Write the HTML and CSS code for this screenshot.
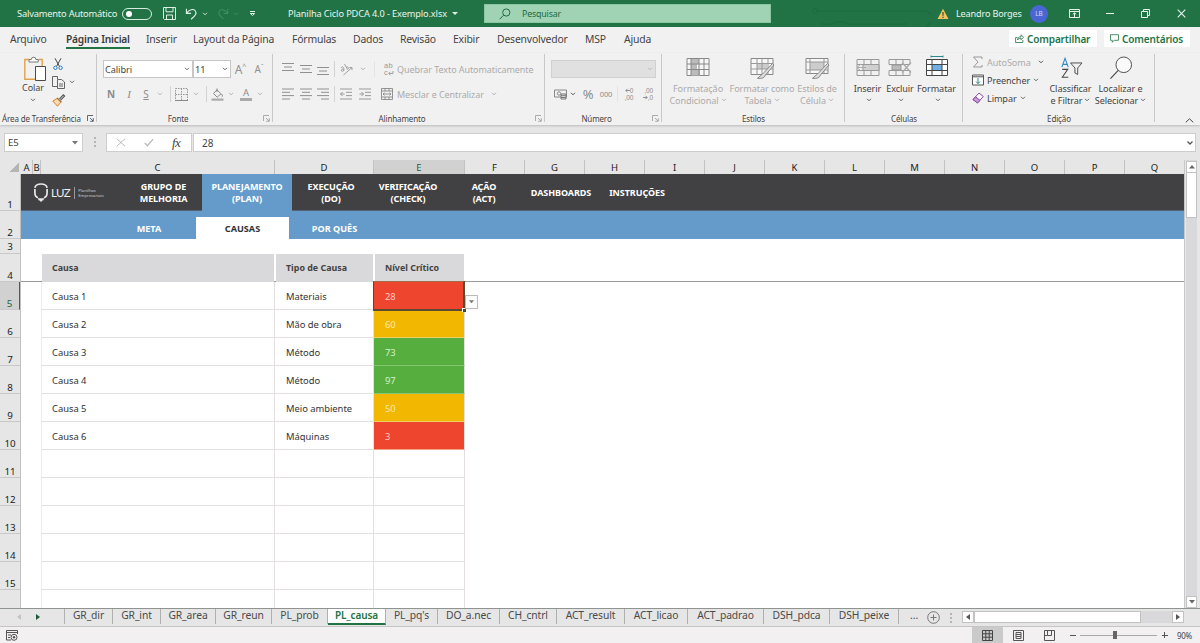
FILE: index.html
```html
<!DOCTYPE html>
<html lang="pt-BR">
<head>
<meta charset="utf-8">
<title>Planilha Ciclo PDCA 4.0 - Exemplo.xlsx</title>
<link rel="stylesheet" href="styles.css">
</head>
<body>
<svg class="defs" aria-hidden="true">
  <symbol id="chev" viewBox="0 0 6 4"><path d="M1 .8l2 2 2-2" fill="none" stroke="currentColor" stroke-width=".9"/></symbol>
  <symbol id="launch" viewBox="0 0 7 7"><path d="M.5 6V.5H6M3 3l3 3M6.3 3.2v3.1H3.2" fill="none" stroke="currentColor" stroke-width=".8"/></symbol>
  <symbol id="al-l" viewBox="0 0 12 12"><path d="M0 1h12M0 4.3h8M0 7.6h12M0 11h8" stroke="currentColor"/></symbol>
  <symbol id="al-c" viewBox="0 0 12 12"><path d="M0 1h12M2 4.3h8M0 7.6h12M2 11h8" stroke="currentColor"/></symbol>
  <symbol id="al-r" viewBox="0 0 12 12"><path d="M0 1h12M4 4.3h8M0 7.6h12M4 11h8" stroke="currentColor"/></symbol>
  <symbol id="v-al" viewBox="0 0 12 8"><path d="M0 .5h12M2 4h8M0 7.5h12" stroke="currentColor"/></symbol>
</svg>

<header class="titlebar">
  <span class="autosave">Salvamento Automático</span>
  <span class="toggle"></span>
  <svg class="save" viewBox="0 0 13 13"><path d="M.5.5h12v12h-11l-1-1zM3 .5v4.3h7V.5M3.5 12.500V8h6v4.500" fill="none" stroke="#dff0e5"/></svg>
  <svg class="undo" viewBox="0 0 14 13"><path d="M1.500.8v5h5M1.800 5.500C4.500 1.500 9 .5 11 3s.6 5.300-4.500 9.200" fill="none" stroke="#dff0e5" stroke-width="1.200"/></svg>
  <svg class="chev light"><use href="#chev"/></svg>
  <svg class="redo" viewBox="0 0 14 13"><path d="M12.500.8v5h-5M12.200 5.500C9.500 1.500 5 .5 3 3s-.6 5.300 4.500 9.200" fill="none" stroke="#428f62" stroke-width="1.200"/></svg>
  <svg class="chev faded"><use href="#chev"/></svg>
  <svg class="qat" viewBox="0 0 7 7"><path d="M1 1.500h5M1.300 3.500l2.200 2 2.200-2z" fill="none" stroke="#dff0e5"/></svg>
  <span class="filename">Planilha Ciclo PDCA 4.0 - Exemplo.xlsx</span>
  <svg class="caret" viewBox="0 0 6 4"><path d="M0 0h6L3 3z" fill="#dff0e5"/></svg>
  <div class="search">
    <svg viewBox="0 0 12 12"><circle cx="7.300" cy="4.500" r="3.600" fill="none" stroke="#216b41"/><path d="M4.600 7.200L.7 11.200" stroke="#216b41"/></svg>
    <span>Pesquisar</span>
  </div>
  <div class="circuit"><svg viewBox="0 0 160 27"><path d="M5 11h110l10 6h35M10 24h12a8 5 0 0 1 14 0h60M115 27l6-6h39" fill="none" stroke="#1d6a3f" stroke-width="1.200"/><circle cx="4" cy="11" r="2.500" fill="none" stroke="#1d6a3f"/></svg></div>
  <svg class="warn" viewBox="0 0 12 12"><path d="M6 .8L11.500 11H.5z" fill="#f2c25c"/><path d="M6 4v3.800M6 8.800v1.200" stroke="#4c4526" stroke-width="1.200"/></svg>
  <span class="user">Leandro Borges</span>
  <span class="avatar">LB</span>
  <svg class="win ribbon-opt" viewBox="0 0 11 9"><path d="M.5.5h10v8H.5zM.5 2.500h10M5.500 8V4M3.800 5.400l1.700-1.600 1.700 1.600" fill="none" stroke="#e8f4ec"/></svg>
  <svg class="win min" viewBox="0 0 8 9"><path d="M0 4.500h8" stroke="#e8f4ec"/></svg>
  <svg class="win max" viewBox="0 0 9 9"><path d="M.5 2.500h6v6h-6zM2.500 2.500v-2h6v6h-2" fill="none" stroke="#e8f4ec"/></svg>
  <svg class="win close" viewBox="0 0 9 9"><path d="M.7.7l7.600 7.600M8.300.7L.7 8.300" stroke="#e8f4ec" stroke-width="1.100"/></svg>
</header>

<nav class="menu">
  <span class="m-arquivo">Arquivo</span>
  <span class="m-home active">Página Inicial</span>
  <span class="m-inserir">Inserir</span>
  <span class="m-layout">Layout da Página</span>
  <span class="m-formulas">Fórmulas</span>
  <span class="m-dados">Dados</span>
  <span class="m-revisao">Revisão</span>
  <span class="m-exibir">Exibir</span>
  <span class="m-dev">Desenvolvedor</span>
  <span class="m-msp">MSP</span>
  <span class="m-ajuda">Ajuda</span>
  <div class="menu-actions">
    <span class="action share"><svg viewBox="0 0 9 9"><path d="M2.500 3.500H.6v5h7.300V6M2.500 6c.2-2.200 1.500-3.300 3.500-3.300V.8l2.600 2.500L6 5.700V4.200C4.500 4.200 3.300 4.700 2.500 6z" fill="none" stroke="#217346" stroke-width=".8"/></svg>Compartilhar</span>
    <span class="action comments"><svg viewBox="0 0 9 9"><path d="M.5.7h8v5.600H4.200L2.300 8.300v-2H.5z" fill="none" stroke="#217346" stroke-width=".8"/></svg>Comentários</span>
  </div>
</nav>

<section class="ribbon">
  <div class="group g-clip">
    <div class="tools">
      <div class="paste">
        <svg viewBox="0 0 22 24"><path d="M5 2.500H.8v19.800H11M14.500 2.500h3.700V9" fill="none" stroke="#e0a24a" stroke-width="1.400"/><path d="M5 5V2.500h2.300a2.300 2.300 0 0 1 4.600 0h2.300V5z" fill="#fff" stroke="#6b6b6b" stroke-width=".9"/><path d="M11.500 9.500h10v14h-10z" fill="#fff" stroke="#4a4a4a"/></svg>
        <span>Colar</span>
        <svg class="chev"><use href="#chev"/></svg>
      </div>
      <div class="clip-side">
        <div class="clip-row"><svg class="cut" viewBox="0 0 10 12"><path d="M2 .3l4.400 8M8 .3l-4.400 8" stroke="#444" fill="none"/><circle cx="2.400" cy="9.800" r="1.700" fill="none" stroke="#2b78bd"/><circle cx="7.600" cy="9.800" r="1.700" fill="none" stroke="#2b78bd"/></svg></div>
        <div class="clip-row"><svg class="copy" viewBox="0 0 13 13"><path d="M5 10.500H.5V.5h5V3M5.500 3.500h4l3 2.500v6.500h-7zM7 8h4M7 10h4" fill="none" stroke="#555" stroke-width=".9"/></svg><svg class="chev"><use href="#chev"/></svg></div>
        <div class="clip-row"><svg class="brush" viewBox="0 0 13 13"><path d="M7.500 4.800L11.300.8l1.300 1.300-4 4M5 4l4.400 4.300" fill="none" stroke="#555" stroke-width="1.200"/><path d="M5 4.500L.8 7l4.700 5.200 3.300-4z" fill="#fbd9b0" stroke="#d9822b"/></svg></div>
      </div>
    </div>
    <div class="label"><span>Área de Transferência</span><svg class="launch dark"><use href="#launch"/></svg></div>
  </div>

  <div class="group g-font">
    <div class="tools stacked off">
      <div class="row font-a">
        <div class="combo">Calibri<svg class="chev"><use href="#chev"/></svg></div>
        <div class="combo">11<svg class="chev"><use href="#chev"/></svg></div>
        <span class="grow">A<sup>^</sup></span>
        <span class="shrink">A<sup>ˇ</sup></span>
      </div>
      <div class="row font-b">
        <b>N</b><i>I</i><u>S</u>
        <svg class="chev"><use href="#chev"/></svg>
        <span class="sep"></span>
        <svg class="ic13" viewBox="0 0 13 13"><path d="M.5 .5h12v12H.5zM6.500 .5v12M.5 6.500h12" fill="none" stroke="#999" stroke-dasharray="1.500 1"/><path d="M0 12.500h13" stroke="#888"/></svg>
        <svg class="chev"><use href="#chev"/></svg>
        <span class="sep"></span>
        <svg class="ic13" viewBox="0 0 13 13"><path d="M2.500 5.500L6 1.800l4 4-3.800 3.400zM6 4V.5M10.500 6c1.200 1.500 1.200 2.500.3 2.800" fill="none" stroke="#888"/><path d="M.5 10.500h12v2.200H.5z" fill="#aaa"/></svg>
        <svg class="chev"><use href="#chev"/></svg>
        <span class="fontcolor">A</span>
        <svg class="chev"><use href="#chev"/></svg>
      </div>
    </div>
    <div class="label shift"><span>Fonte</span><svg class="launch"><use href="#launch"/></svg></div>
  </div>

  <div class="group g-align">
    <div class="tools stacked off">
      <div class="row align-a">
        <svg class="val up"><use href="#v-al"/></svg><svg class="val"><use href="#v-al"/></svg><svg class="val down"><use href="#v-al"/></svg>
        <span class="sep"></span>
        <svg class="ic13" viewBox="0 0 13 13"><path d="M1 5c1-2 3-1 2.800.8L3.600 8M3.500 6C1.500 5.500.5 8 2 8.300 3 8.500 4 7.500 4 6.500M4.500 1l3 5.500C9 6 8.500 3 6.500 4M3.500 12L12 4.500M9.300 4.500H12V7" fill="none" stroke="#999" stroke-width=".9"/></svg>
        <svg class="chev"><use href="#chev"/></svg>
        <span class="sep pale"></span>
        <span class="wrap-ic"><span>ab</span><span>c<svg viewBox="0 0 6 5"><path d="M5 0v2.500H.8M2.500.800L.8 2.500l1.700 1.700" fill="none" stroke="#999" stroke-width=".9"/></svg></span></span>
        <span class="txt">Quebrar Texto Automaticamente</span>
      </div>
      <div class="row align-b">
        <svg class="ic12"><use href="#al-l"/></svg><svg class="ic12"><use href="#al-c"/></svg><svg class="ic12"><use href="#al-r"/></svg>
        <span class="sep"></span>
        <svg class="ic12" viewBox="0 0 12 12"><path d="M0 1h12M6 4.300h6M6 7.600h6M0 11h12M4.500 6H.5M2.500 4l-2 2 2 2" fill="none" stroke="#999"/></svg>
        <svg class="ic12" viewBox="0 0 12 12"><path d="M0 1h12M6 4.300h6M6 7.600h6M0 11h12M.5 6h4M2.500 4l2 2-2 2" fill="none" stroke="#999"/></svg>
        <span></span>
        <svg class="ic12" viewBox="0 0 12 12"><path d="M.5 .5h11v11H.5zM.5 3h11M.5 9h11M4 .5V3M8 .5V3M4 9v2.500M8 9v2.500M2 6h8M3.500 4.700L2 6l1.500 1.300M8.500 4.700L10 6 8.500 7.300" fill="none" stroke="#888" stroke-width=".9"/></svg>
        <span class="txt">Mesclar e Centralizar</span>
        <svg class="chev"><use href="#chev"/></svg>
      </div>
    </div>
    <div class="label left"><span>Alinhamento</span><svg class="launch"><use href="#launch"/></svg></div>
  </div>

  <div class="group g-num">
    <div class="tools stacked off">
      <div class="row"><div class="combo grey"><svg class="chev"><use href="#chev"/></svg></div></div>
      <div class="row num-b">
        <svg class="ic13" viewBox="0 0 13 12"><path d="M.5 1.500h12v7H.5z" fill="none" stroke="#888"/><circle cx="5" cy="5" r="1.700" fill="none" stroke="#888"/><path d="M7 5.500h5v5H7zM7 7.200h5M7 9h5" fill="#eee" stroke="#777"/></svg>
        <svg class="chev dark"><use href="#chev"/></svg>
        <span class="pct">%</span><span class="zeros">000</span>
        <span class="sep pale"></span>
        <span class="dec"><span><svg viewBox="0 0 5 5"><path d="M5 2.500H.8M2.500.800L.8 2.500l1.700 1.700" fill="none" stroke="#888" stroke-width=".9"/></svg>0</span><span>,00</span></span>
        <span class="dec"><span>,00</span><span><svg viewBox="0 0 5 5"><path d="M0 2.500h4.200M2.500.800l1.700 1.700-1.700 1.700" fill="none" stroke="#888" stroke-width=".9"/></svg>,0</span></span>
      </div>
    </div>
    <div class="label left"><span>Número</span><svg class="launch"><use href="#launch"/></svg></div>
  </div>

  <div class="group g-style">
    <div class="tools style-tools off">
      <div class="big"><svg class="bigic" viewBox="0 0 24 22"><path d="M1 1.500h22v17H1z" fill="#f7f7f7" stroke="#888"/><path d="M5 2h8v5H5zM5 12h9v6.500H5zM5 7h6v5H5z" fill="#bbb"/><path d="M1 7h22M1 12.500h22M5 1.500v17M13 1.500v17M18 1.500v17" stroke="#888" fill="none"/></svg><span>Formatação<br>Condicional<svg class="chev"><use href="#chev"/></svg></span></div>
      <div class="big"><svg class="bigic" viewBox="0 0 24 22"><path d="M1 1.500h22v16H1z" fill="#f7f7f7" stroke="#888"/><path d="M7 7h10v5H7z" fill="#ccc"/><path d="M1 6.500h22M1 12h22M7 1.500v16M12 1.500v16M18 1.500v16" stroke="#999" fill="none"/><path d="M22.500 6.500l-8.500 9-1.500 1.500-5 4.300c4 .6 7-.4 8-3.300l8.500-10z" fill="#ddd" stroke="#888"/></svg><span>Formatar como<br>Tabela<svg class="chev"><use href="#chev"/></svg></span></div>
      <div class="big"><svg class="bigic" viewBox="0 0 24 22"><path d="M1 1.500h22v15H1z" fill="#f7f7f7" stroke="#888"/><path d="M5 5h14v8H5z" fill="#ccc"/><path d="M1 5h22M1 13h22M5 1.500v15M19 1.500v15" stroke="#999" fill="none"/><path d="M22.500 6.500l-8.500 9-1.500 1.500-5 4.300c4 .6 7-.4 8-3.300l8.500-10z" fill="#ddd" stroke="#888"/></svg><span>Estilos de<br>Célula<svg class="chev"><use href="#chev"/></svg></span></div>
    </div>
    <div class="label"><span>Estilos</span></div>
  </div>

  <div class="group g-cell">
    <div class="tools cell-tools">
      <div class="big"><svg class="bigic" viewBox="0 0 24 22"><path d="M1 2.500h22v16H1zM1 7.500h22M1 13.500h22M8 2.500v5M8 13.500v5M15 2.500v5M15 13.500v5" fill="none" stroke="#999"/><path d="M7 7.500h16v6H7z" fill="#d0d0d0" stroke="#999"/><path d="M5 7L1 10.500 5 14M1 10.500h9" fill="none" stroke="#aaa"/></svg><span>Inserir<br><svg class="chev"><use href="#chev"/></svg></span></div>
      <div class="big"><svg class="bigic" viewBox="0 0 24 22"><path d="M1 2.500h21v5H1zM1 13.500h21v5H1zM8 2.500v5M8 13.500v5M15 2.500v5M15 13.500v5" fill="none" stroke="#999"/><path d="M4 8h9v5H4z" fill="#bbb" stroke="#999"/><path d="M14 5.500l9 10M23 5.500l-9 10" stroke="#aaa" stroke-width="1.300"/></svg><span>Excluir<br><svg class="chev"><use href="#chev"/></svg></span></div>
      <div class="big"><svg class="bigic" viewBox="0 0 24 22"><path d="M1.500 2.500h21v16h-21z" fill="#fff" stroke="#444"/><path d="M7 7.500h10v6H7z" fill="#6fb1e4"/><path d="M1.500 7.500h21M1.500 13.500h21M7 2.500v16M17 2.500v16" stroke="#444"/><path d="M6 -.5h12M6 -1.500v2M18 -1.500v2" stroke="#2b8a8f" fill="none"/></svg><span>Formatar<br><svg class="chev"><use href="#chev"/></svg></span></div>
    </div>
    <div class="label"><span>Células</span></div>
  </div>

  <div class="group g-edit">
    <div class="tools edit-tools">
      <div class="edit-list">
        <div class="edit-row off"><svg viewBox="0 0 12 12"><path d="M10 3V1H1.500L6 6l-4.500 5H10V9" fill="none" stroke="#999"/></svg>AutoSoma<svg class="chev dark far"><use href="#chev"/></svg></div>
        <div class="edit-row"><svg viewBox="0 0 12 12"><path d="M.5 1h11v10H.5zM.5 2.800h11" fill="#fff" stroke="#555"/><path d="M6 4v5.500M4 7.500l2 2 2-2" fill="none" stroke="#2e8b7d"/></svg>Preencher<svg class="chev"><use href="#chev"/></svg></div>
        <div class="edit-row"><svg viewBox="0 0 12 12"><path d="M1 7.500L7 1l4.300 3.500L5.500 11z" fill="#fff" stroke="#8d4a9e"/><path d="M1 7.500l2.500-2.700L8 8.300 5.500 11z" fill="#c79ad3" stroke="#8d4a9e"/></svg>Limpar<svg class="chev"><use href="#chev"/></svg></div>
      </div>
      <div class="big"><svg class="bigic" viewBox="0 0 24 24"><path d="M2 11L5.500 1.500 9 11M3.200 8h4.600" fill="none" stroke="#2f86c6" stroke-width="1.200"/><path d="M2.500 13.500h6l-6 8.500h6.500" fill="none" stroke="#444" stroke-width="1.100"/><path d="M11.500 6.500H24l-4.700 5.500v7l-3-1.500V12z" fill="none" stroke="#444"/></svg><span>Classificar<br>e Filtrar<svg class="chev"><use href="#chev"/></svg></span></div>
      <div class="big"><svg class="bigic" viewBox="0 0 24 24"><circle cx="15" cy="8.500" r="8.500" fill="#fafafa" stroke="#444"/><path d="M9 14.500L.5 23.500" stroke="#444" stroke-width="1.200"/></svg><span>Localizar e<br>Selecionar<svg class="chev"><use href="#chev"/></svg></span></div>
    </div>
    <div class="label"><span>Edição</span></div>
  </div>
  <div class="ribbon-end"><svg viewBox="0 0 9 5"><path d="M.8 4.300L4.500.8l3.700 3.500" fill="none" stroke="#444"/></svg></div>
</section>

<section class="formula-bar">
  <div class="namebox">E5<svg viewBox="0 0 6 4"><path d="M0 0h6L3 3.500z" fill="#777"/></svg></div>
  <div class="dots"><i></i><i></i><i></i></div>
  <div class="fx">
    <svg viewBox="0 0 10 9"><path d="M.8.800l8.200 7.400M9 .8L.8 8.200" stroke="#bbb"/></svg>
    <svg viewBox="0 0 11 9"><path d="M.8 5l3 3L10 .800" fill="none" stroke="#bbb" stroke-width="1.500"/></svg>
    <em>fx</em>
  </div>
  <div class="formula">28<svg viewBox="0 0 6 4"><path d="M.5 .5L3 3 5.500.5" fill="none" stroke="#555" stroke-width="1.300"/></svg></div>
</section>

<main class="workspace">
  <div class="grid-area">
    <div class="cols">
      <span class="corner"></span><span>A</span><span>B</span><span>C</span><span>D</span><span class="sel">E</span><span>F</span><span>G</span><span>H</span><span>I</span><span>J</span><span>K</span><span>L</span><span>M</span><span>N</span><span>O</span><span>P</span><span>Q</span>
    </div>
    <div class="sheet">
      <div class="rownums">
        <span class="r1">1</span><span class="r2">2</span><span class="r3">3</span><span class="r4">4</span><span class="sel">5</span><span>6</span><span>7</span><span>8</span><span>9</span><span>10</span><span>11</span><span>12</span><span>13</span><span>14</span><span>15</span><span></span>
      </div>
      <div class="content">
        <div class="topnav">
          <div class="logo">
            <svg viewBox="0 0 14 20"><path d="M4 14.700C1.500 14 .9 12.500.9 9.500V6M.9 4.800C1.300 2.300 3 1 7 1s5.700 1.300 6.100 3.800M13.100 6v3.500c0 3-.6 4.500-3.100 5.200" fill="none" stroke="#e8e8e8" stroke-width="1.700"/><path d="M3.800 15.200h6.400l-.9 2.200H8.200L7 19.200l-1.200-1.800H4.700z" fill="#e8e8e8"/></svg>
            <span class="luz">LUZ</span><span class="tag">Planilhas<br>Empresariais</span>
          </div>
          <a>GRUPO DE<br>MELHORIA</a><a class="on">PLANEJAMENTO<br>(PLAN)</a><a>EXECUÇÃO<br>(DO)</a><a>VERIFICAÇÃO<br>(CHECK)</a><a>AÇÃO<br>(ACT)</a><a>DASHBOARDS</a><a>INSTRUÇÕES</a>
        </div>
        <div class="subnav"><a>META</a><a class="on">CAUSAS</a><a>POR QUÊS</a></div>
        <div class="thead"><span>Causa</span><span>Tipo de Causa</span><span>Nível Crítico</span></div>
        <div class="freeze"></div>
        <div class="tbody">
          <div class="tr"><span>Causa 1</span><span>Materiais</span><span class="red picked">28<i class="handle"></i><i class="drop"><svg viewBox="0 0 6 4"><path d="M0 0h6L3 3.500z" fill="#777"/></svg></i></span></div>
          <div class="tr"><span>Causa 2</span><span>Mão de obra</span><span class="yellow">60</span></div>
          <div class="tr"><span>Causa 3</span><span>Método</span><span class="green">73</span></div>
          <div class="tr"><span>Causa 4</span><span>Método</span><span class="green">97</span></div>
          <div class="tr"><span>Causa 5</span><span>Meio ambiente</span><span class="yellow">50</span></div>
          <div class="tr"><span>Causa 6</span><span>Máquinas</span><span class="red">3</span></div>
          <div class="tr"><span></span><span></span><span></span></div>
          <div class="tr"><span></span><span></span><span></span></div>
          <div class="tr"><span></span><span></span><span></span></div>
          <div class="tr"><span></span><span></span><span></span></div>
          <div class="tr"><span></span><span></span><span></span></div>
          <div class="tr"><span></span><span></span><span></span></div>
        </div>
      </div>
    </div>
  </div>
  <div class="vscroll">
    <b class="arrow"><svg viewBox="0 0 6 4"><path d="M0 3.500h6L3 0z" fill="#666"/></svg></b>
    <b class="thumb"></b>
    <b class="arrow"><svg viewBox="0 0 6 4"><path d="M0 0h6L3 3.500z" fill="#666"/></svg></b>
  </div>
</main>

<footer class="tabs">
  <div class="tabnav"><svg viewBox="0 0 4 6"><path d="M4 0v6L0 3z" fill="#c4c4c4"/></svg><svg viewBox="0 0 4 6"><path d="M0 0v6l4-3z" fill="#1d5a39"/></svg></div>
  <span>GR_dir</span><span>GR_int</span><span>GR_area</span><span>GR_reun</span><span>PL_prob</span><span class="on">PL_causa</span><span>PL_pq's</span><span>DO_a.nec</span><span>CH_cntrl</span><span>ACT_result</span><span>ACT_licao</span><span>ACT_padrao</span><span>DSH_pdca</span><span>DSH_peixe</span>
  <div class="more">...</div>
  <svg class="plus" viewBox="0 0 13 13"><circle cx="6.500" cy="6.500" r="5.800" fill="none" stroke="#777"/><path d="M6.500 3.500v6M3.500 6.500h6" stroke="#777"/></svg>
  <div class="dots"><i></i><i></i><i></i></div>
  <div class="hscroll">
    <b class="arrow"><svg viewBox="0 0 4 6"><path d="M4 0v6L0 3z" fill="#555"/></svg></b>
    <b class="thumb"></b>
    <b class="arrow"><svg viewBox="0 0 4 6"><path d="M0 0v6l4-3z" fill="#555"/></svg></b>
  </div>
</footer>

<footer class="status">
  <svg class="macro" viewBox="0 0 12 11"><path d="M.5.500h11V4M.5.500v9.500H5M.5 2.500h11M2 5h3M2 7.500h2" fill="none" stroke="#555"/><circle cx="8" cy="7.300" r="3" fill="none" stroke="#555"/><circle cx="8" cy="7.300" r="1.200" fill="#555"/></svg>
  <div class="views">
    <div class="view on"><svg viewBox="0 0 11 11"><path d="M.5.500h10v10H.5zM.5 3.800h10M.5 7.200h10M3.800.500v10M7.200.500v10" fill="none" stroke="#444"/></svg></div>
    <div class="view"><svg viewBox="0 0 11 11"><path d="M.5.500h10v10H.5zM3 2.500h5v6H3zM3 4.500h5M3 6.500h5" fill="none" stroke="#555"/></svg></div>
    <div class="view"><svg viewBox="0 0 11 11"><path d="M.5.500h10v10H.5zM3.500.500v5h4v-5M.5 5.500h3" fill="none" stroke="#555"/></svg></div>
  </div>
  <div class="zoom"><i class="minus"></i><div class="slider"><b></b></div><i class="minus add"></i><span>90%</span></div>
</footer>
</body>
</html>
```
FILE: styles.css
```css
*, *::before, *::after { box-sizing: border-box; }
body {
  margin: 0; width: 1200px; height: 643px; overflow: hidden;
  display: flex; flex-direction: column;
  font-family: "Noto Sans", "Open Sans", sans-serif; font-size: 9px; color: #444;
  background: #e6e6e6; white-space: nowrap;
}
svg { display: block; flex: none; overflow: visible; }
.defs { width: 0; height: 0; position: absolute; }
.chev { width: 6px; height: 4px; color: #555; }
.launch { width: 7px; height: 7px; color: #999; }
.launch.dark, .chev.dark { color: #444; }

/* title bar */
.titlebar { height: 27px; flex: none; background: #217346; color: #e9f5ed; display: flex; align-items: center; padding-left: 17px; letter-spacing: -.19px; font-size: 9.3px; }
.autosave { width: 105px; }
.toggle { width: 30px; height: 12px; border: 1px solid #d5ecdd; border-radius: 6px; display: flex; align-items: center; padding-left: 3px; }
.toggle::before { content: ""; width: 6px; height: 6px; border-radius: 50%; background: #fff; }
.save { width: 13px; height: 13px; margin-left: 11px; }
.undo { width: 13px; height: 12px; margin-left: 9px; }
.chev.light { color: #dff0e5; margin-left: 4px; }
.redo { width: 12px; height: 12px; margin-left: 9px; }
.chev.faded { color: #428f62; margin-left: 4px; }
.qat { width: 7px; height: 7px; margin-left: 10px; }
.filename { margin-left: 32px; width: 164px; letter-spacing: -.1px; font-size: 9.200px; }
.caret { width: 6px; height: 4px; }
.search { width: 287px; height: 19px; margin-left: 26px; background: #9fd3b4; border: 1px solid #8ac6a2; color: #216b41; display: flex; align-items: center; gap: 11px; padding-left: 14px; font-size: 8.900px; }
.search svg { width: 12px; height: 12px; }
.circuit { width: 120px; margin-left: 40px; height: 27px; overflow: hidden; }
.circuit svg { width: 160px; height: 27px; }
.warn { width: 12px; height: 12px; margin-left: 6px; }
.user { margin-left: 7px; width: 74px; font-size: 9.100px; letter-spacing: -.15px; }
.avatar { width: 18px; height: 18px; border-radius: 50%; background: #4a66d4; color: #d5dcfa; font-size: 6.500px; display: flex; align-items: center; justify-content: center; letter-spacing: 0; }
.win { height: 9px; }
.ribbon-opt { width: 11px; margin-left: 21px; }
.min { width: 8px; margin-left: 26px; }
.max { width: 9px; margin-left: 27px; }
.close { width: 9px; margin-left: 27px; }

/* menu */
.menu { height: 26px; flex: none; background: #f2f1f1; display: flex; align-items: flex-start; padding-left: 10px; font-size: 10.400px; letter-spacing: -.18px; line-height: 14px; padding-top: 5px; }
.menu .active { font-weight: 600; font-size: 10.200px; letter-spacing: -.2px; color: #3b3b3b; }
.menu .active::after { content: ""; display: block; height: 2px; width: 64px; background: #217346; margin-top: 1px; }
.m-arquivo { width: 56px; } .m-home { width: 80px; } .m-inserir { width: 47px; } .m-layout { width: 99px; }
.m-formulas { width: 61px; } .m-dados { width: 47px; } .m-revisao { width: 53px; } .m-exibir { width: 44px; }
.m-dev { width: 88px; } .m-msp { width: 39px; } .m-ajuda { width: 40px; }
.menu-actions { margin-left: 345px; margin-top: -2px; display: flex; gap: 7px; }
.action { height: 17px; background: #fff; color: #217346; font-weight: 600; font-size: 10px; letter-spacing: -.13px; display: flex; align-items: center; gap: 3px; padding: 0 6px; border-radius: 1px; }
.share { width: 88px; } .comments { width: 86px; }
.action svg { width: 9px; height: 9px; }

/* ribbon */
.ribbon { height: 72px; flex: none; background: #f2f1f1; display: flex; box-shadow: 0 1px 2px #bbb; font-size: 9px; letter-spacing: -.08px; z-index: 1; }
.group { height: 72px; display: flex; flex-direction: column; position: relative; }
.group::after { content: ""; position: absolute; right: 0; top: 1px; width: 1px; height: 68px; background: #c9c8c8; }
.g-clip { width: 97px; } .g-font { width: 176px; } .g-align { width: 272px; } .g-num { width: 117px; }
.g-style { width: 183px; } .g-cell { width: 118px; } .g-edit { width: 192px; }
.tools { height: 60px; display: flex; }
.stacked { flex-direction: column; padding-top: 4px; gap: 1px; }
.row { height: 24px; display: grid; align-items: center; justify-items: center; grid-auto-flow: column; justify-content: start; }
.off { color: #ababab; }
.off .chev { color: #aaa; }
.off .chev.dark { color: #444; }
.label { height: 12px; line-height: 11px; font-size: 8px; letter-spacing: -.13px; display: flex; justify-content: center; align-items: center; color: #444; position: relative; margin-top: -1px; }
.label .launch { position: absolute; right: 3px; top: 3px; }
.g-clip .label { justify-content: flex-start; padding-left: 2px; }
.label.left { padding-right: 14px; }
.label.shift { padding-right: 14px; }
.sep { width: 1px; height: 16px; background: #d3d3d3; }
.sep.pale { background: #e4e4e4; }
.ic13 { width: 13px; height: 13px; } .ic12 { width: 12px; height: 12px; color: #909090; }
.val { width: 12px; height: 8px; color: #909090; } .val.up { margin-top: -4px; } .val.down { margin-top: 4px; }

.paste { width: 46px; padding: 4px 0 0 20px; display: flex; flex-direction: column; align-items: center; color: #444; }
.paste svg:first-child { width: 22px; height: 24px; margin-left: 4px; }
.paste span { line-height: 12px; margin-top: 1px; }
.paste .chev { margin-top: 4px; }
.clip-side { padding: 2px 0 0 6px; }
.clip-row { height: 18px; display: flex; align-items: center; gap: 4px; }
.cut { width: 10px; height: 12px; margin-left: 1px; } .copy { width: 13px; height: 13px; } .brush { width: 13px; height: 13px; }

.font-a { grid-template-columns: 90px 38px 19px 18px; padding-left: 6px; }
.combo { width: 100%; height: 18px; background: #fff; border: 1px solid #c6c6c6; display: flex; align-items: center; justify-content: space-between; padding: 0 2px 0 1px; color: #444; font-size: 9.200px; }
.combo .chev { color: #555; }
.combo.grey { width: 105px; margin-left: 6px; background: #e1e0e0; justify-content: flex-end; border-color: #d0d0d0; }
.combo.grey .chev { color: #b5b5b5; }
.grow { font-size: 12px; color: #909090; } .shrink { font-size: 10px; color: #909090; }
.grow sup, .shrink sup { font-size: 7px; line-height: 0; }
.font-b { grid-template-columns: 18px 18px 16px 12px 8px 14px 16px 4px 18px 10px 20px 8px; padding-left: 5px; font-size: 10px; color: #8d8d8d; }
.font-b i { font-family: "Liberation Serif", serif; font-size: 11px; }
.fontcolor { font-size: 9.500px; line-height: 9px; border-bottom: 3px solid #aaa; width: 12px; height: 13px; text-align: center; }
.align-a { grid-template-columns: 18px 17px 18px 4px 20px 13px 10px 18px auto; padding-left: 6px; }
.align-b { grid-template-columns: 18px 17px 18px 4px 20px 18px 2px 21px auto 20px; padding-left: 6px; }
.wrap-ic { font: 8px/7px "Liberation Sans", sans-serif; color: #999; display: flex; flex-direction: column; margin-left: 2px; }
.wrap-ic span { display: flex; height: 7px; font-size: 7.500px; letter-spacing: .4px; }
.wrap-ic svg { width: 6px; height: 5px; margin-top: 2px; }
.num-b { grid-template-columns: 18px 8px 22px 14px 8px 16px 22px; padding-left: 6px; color: #8c8c8c; }
.pct { font-size: 13px; } .zeros { font-size: 7.500px; }
.dec { font: 6.500px/7px "Liberation Sans", sans-serif; }
.dec span { display: flex; justify-content: flex-end; align-items: center; height: 7px; }
.dec svg { width: 5px; height: 5px; }

.big { display: flex; flex-direction: column; align-items: center; text-align: center; line-height: 12px; padding-top: 4px; font-size: 9.100px; }
.big span { height: 24px; }
.big span .chev { display: inline-block; margin-left: 2px; vertical-align: 2px; }
.bigic { width: 24px; height: 22px; margin-bottom: 4px; }
.style-tools { display: grid; grid-template-columns: 58px 70px 40px; padding-left: 7px; }
.cell-tools { display: grid; grid-template-columns: 33px 32px 41px; padding-left: 6px; }
.edit-tools { display: grid; grid-template-columns: 78px 45px 55px; padding-left: 7px; }
.edit-row { height: 18px; display: flex; align-items: center; gap: 3px; font-size: 9.100px; }
.edit-row svg:first-child { width: 12px; height: 12px; margin-left: 2px; }
.edit-row .far { margin-left: 4px; }
.ribbon-end { flex: 1; display: flex; align-items: flex-end; justify-content: flex-end; padding: 0 6px 2px; }
.ribbon-end svg { width: 9px; height: 5px; }

/* formula bar */
.formula-bar { height: 35px; flex: none; display: flex; padding: 8px 4px 0; font-size: 10px; }
.namebox { width: 79px; height: 19px; background: #fff; border: 1px solid #cdcdcd; display: flex; align-items: center; justify-content: space-between; padding: 0 4px 0 3px; font-size: 9.500px; }
.namebox svg, .formula svg { width: 6px; height: 4px; }
.dots { width: 23px; height: 18px; display: flex; flex-direction: column; align-items: center; justify-content: center; gap: 2px; }
.dots i { width: 2px; height: 2px; background: #b5b5b5; }
.fx { width: 86px; height: 19px; background: #fff; border: 1px solid #cdcdcd; display: flex; align-items: center; padding-left: 9px; gap: 18px; }
.fx svg { width: 10px; height: 9px; }
.fx em { font: italic 13px/14px "Liberation Serif", serif; color: #444; letter-spacing: -.5px; }
.formula { flex: 1; height: 19px; margin-left: 1px; background: #fff; border: 1px solid #cdcdcd; display: flex; align-items: center; justify-content: space-between; padding: 0 2px 0 8px; }

/* sheet */
.workspace { height: 448px; flex: none; display: flex; }
.grid-area { width: 1184px; }
.cols { height: 14px; display: grid; grid-template-columns: 21px 12px 8px 234px 99px 91px repeat(12, 60px); width: 1184px; overflow: hidden; color: #222; font-size: 9.500px; line-height: 15px; text-align: center; }
.cols span { border-right: 1px solid #c2c2c2; }
.cols .sel { background: #d2d1d1; color: #226343; border-bottom: 1px solid #217346; }
.cols .corner { border: 0; background: linear-gradient(135deg, transparent 50%, #b5b5b5 50%) 9px 2px / 10px 10px no-repeat; }
.sheet { height: 434px; display: flex; overflow: hidden; }
.rownums { width: 21px; border-right: 1px solid #c0c0c0; color: #222; font-size: 9.800px; }
.rownums span { height: 28px; display: flex; align-items: flex-end; justify-content: center; line-height: 11px; border-bottom: 1px solid #c9c9c9; }
.rownums .r1 { height: 37px; } .rownums .r3 { height: 15px; line-height: 13px; }
.rownums .sel { background: #d2d1d1; color: #226343; border-right: 1px solid #217346; }
.content { flex: 1; background: #fff; }
.topnav { height: 37px; background: #414042; border-bottom: 1px solid #53647a; display: grid; grid-template-columns: 102px 79px 90px 78px 76px 76px 78px 74px; color: #fff; font-weight: 700; font-size: 9px; line-height: 12.500px; letter-spacing: -.08px; }
.topnav a { display: flex; align-items: center; justify-content: center; text-align: center; padding-top: 1px; }
.topnav a:nth-of-type(1) { padding-left: 2px; }
.topnav .on { background: #659bcb; height: 37px; }
.logo { display: flex; align-items: center; padding-left: 13px; }
.logo svg { width: 14px; height: 20px; }
.luz { font: 400 11.500px/14px Lato, sans-serif; color: #eee; margin-left: 3px; letter-spacing: -.6px; }
.tag { font: 400 4.300px/5px "Noto Sans", sans-serif; color: #c9c9c9; border-left: 1px solid #999; margin-left: 4px; padding: 1px 0 1px 3px; letter-spacing: -.05px; }
.subnav { height: 28px; background: #659bcb; color: #fff; font-weight: 700; font-size: 9.100px; display: flex; padding-left: 81px; align-items: flex-end; }
.subnav a { height: 22px; width: 94px; text-align: center; line-height: 23px; }
.subnav a:nth-of-type(3) { width: 91px; }
.subnav .on { background: #fff; color: #333; width: 93px; }
.thead { height: 27px; margin: 15px 0 0 21px; display: grid; grid-template-columns: 232px 97px 89px; gap: 2px; font-weight: 700; font-size: 8.900px; line-height: 28px; color: #444; }
.thead span { background: #d9d8da; padding-left: 10px; }
.freeze { height: 1px; background: #9b9b9b; }
.tbody { margin-left: 20px; width: 424px; font-size: 9.400px; color: #333; letter-spacing: -.02px; }
.tr { height: 28px; display: grid; grid-template-columns: 234px 99px 91px; line-height: 29px; }
.tr span { height: 28px; border-right: 1px solid #e4dfe1; border-bottom: 1px solid #e4e0e1; padding-left: 11px; position: relative; }
.tr span:first-child { border-left: 1px solid #efecec; padding-left: 10px; }
.tr .red { background: #ee452e; color: #fbc9bd; border-bottom-color: #f3a184; }
.tr .yellow { background: #f2b700; color: #fbe9a4; border-bottom-color: #f0cf62; }
.tr .green { background: #56ae3e; color: #d6f0cb; border-bottom-color: #84c66f; }
.tr .picked { z-index: 1; }
.picked::before { content: ""; position: absolute; left: -1px; top: -1px; width: 92px; height: 30px; border: 1px solid #5d4a2e; border-width: 1px 2px 2px 1px; border-top-color: #a36a4c; }
.handle { position: absolute; right: -2px; bottom: -3px; width: 4px; height: 4px; background: #3f4a2a; border: solid #fff; border-width: 1px 0 0 1px; }
.drop { position: absolute; right: -14px; bottom: 0; width: 13px; height: 14px; background: #fdfdfd; border: 1px solid #bbb; display: flex; align-items: center; justify-content: center; z-index: 2; }
.drop svg { width: 5px; height: 4px; }

.vscroll { flex: 1; display: flex; flex-direction: column; padding: 1px 3px 0 1px; background: linear-gradient(90deg, #e6e6e6 1px, #d9d9db 1px 12px, #e6e6e6 12px); border-left: 1px solid #c8c8c8; }
.vscroll b { background: #fff; border: 1px solid #c2c2c2; }
.vscroll .arrow { height: 12px; display: flex; align-items: center; justify-content: center; }
.vscroll svg { width: 6px; height: 4px; }
.vscroll .thumb { height: 45px; border-top: 0; margin-bottom: 378px; }

/* sheet tabs */
.tabs { height: 19px; flex: none; border-top: 1px solid #8f9490; border-bottom: 1px solid #c6c4c5; display: flex; align-items: flex-start; font-size: 10.300px; line-height: 13px; color: #4a4a4a; letter-spacing: -.1px; }
.tabnav { width: 65px; height: 15px; border-right: 1px solid #b2b2b2; display: flex; align-items: center; gap: 15px; padding-left: 17px; }
.tabnav svg { width: 4px; height: 6px; }
.tabs span { height: 15px; border-right: 1px solid #b0b0b0; text-align: center; width: 48px; }
.tabs span:nth-of-type(4), .tabs span:nth-of-type(5) { width: 56px; }
.tabs span:nth-of-type(3) { width: 55px; }
.tabs .on { width: 58px; height: 16px; background: #fff; border-bottom: 2px solid #217346; color: #217346; font-weight: 600; font-size: 10px; }
.tabs span:nth-of-type(7) { width: 52px; } .tabs span:nth-of-type(8) { width: 62px; } .tabs span:nth-of-type(9) { width: 57px; }
.tabs span:nth-of-type(10) { width: 68px; } .tabs span:nth-of-type(11) { width: 63px; } .tabs span:nth-of-type(12) { width: 76px; }
.tabs span:nth-of-type(13) { width: 66px; } .tabs span:nth-of-type(14) { width: 69px; }
.more { margin-left: 11px; width: 17px; letter-spacing: 0; }
.plus { width: 13px; height: 13px; margin-top: 2px; }
.tabs .dots { width: 22px; height: 17px; }
.hscroll { width: 222px; height: 12px; margin-top: 2px; background: #d9d9db; display: flex; justify-content: space-between; }
.hscroll b { background: #fff; border: 1px solid #c2c2c2; }
.hscroll .arrow { width: 12px; display: flex; align-items: center; justify-content: center; }
.hscroll svg { width: 4px; height: 6px; }
.hscroll .thumb { width: 167px; margin-left: -1px; margin-right: 31px; }

/* status bar */
.status { height: 16px; flex: none; background: #f2f0f1; display: flex; align-items: center; }
.macro { width: 12px; height: 11px; margin-left: 6px; }
.views { margin-left: 954px; display: flex; height: 16px; }
.view { width: 31px; display: flex; align-items: center; justify-content: center; }
.view.on { background: #cbcaca; }
.view svg { width: 11px; height: 11px; }
.zoom { display: flex; align-items: center; margin-left: 5px; font-size: 8px; }
.minus { width: 6px; height: 1px; background: #555; }
.add { background: linear-gradient(#555, #555) center / 6px 1px no-repeat, linear-gradient(#555, #555) center / 1px 6px no-repeat; height: 6px; width: 7px; margin-left: 4px; }
.slider { width: 77px; height: 1px; background: #a9a9a9; margin-left: 4px; display: flex; align-items: center; justify-content: center; }
.slider b { width: 4px; height: 8px; background: #666; margin-right: 7px; }
.zoom span { margin-left: 9px; letter-spacing: -.3px; }
```
